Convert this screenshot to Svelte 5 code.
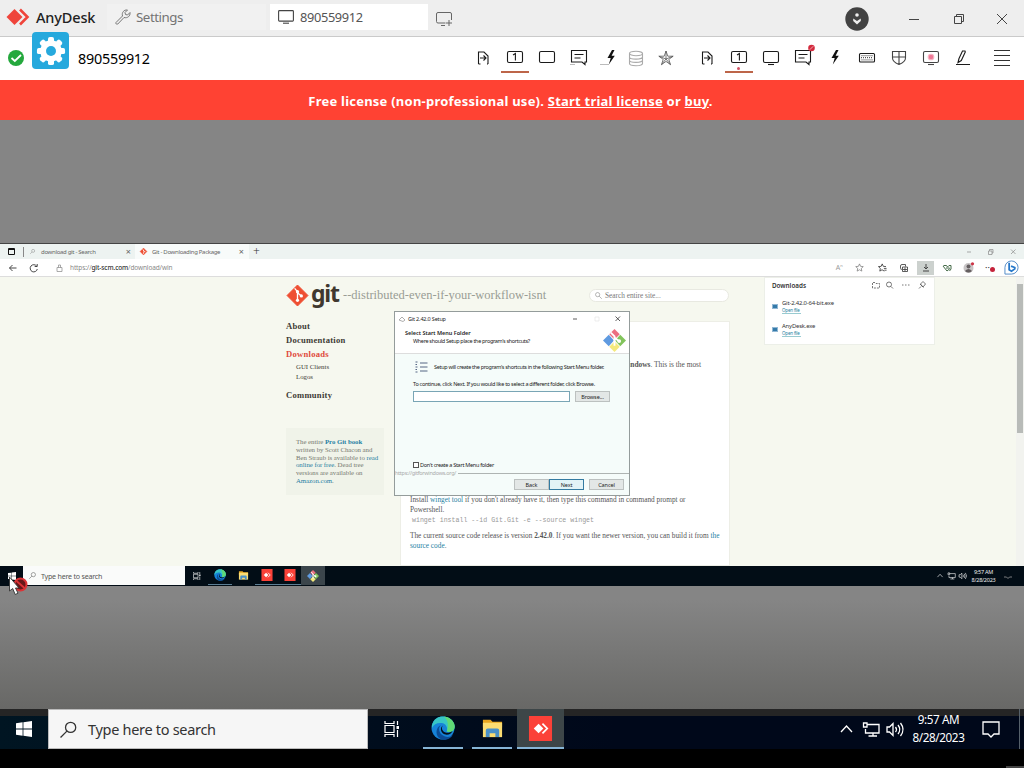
<script>
  const leftTools = ["file", "monitorOne", "monitorFlat", "chat", "bolt", "stack", "star"];
  const rightTools = ["file", "monitorOne", "monitor", "chatBlocked", "boltPlain", "keyboard", "shield", "record", "pen"];

  const downloads = ["Git-2.42.0-64-bit.exe", "AnyDesk.exe"];
</script>

{#snippet icon(name)}
  <svg class="icon {name}" viewBox="0 0 20 20" width="20" height="20">
    {#if name === "file"}
      <path d="M5.500 16V4h5.500l4 4v8M5.500 16h2M15 16h-1M7 10h6M10.500 7.500 13 10l-2.500 2.500" />
    {:else if name === "monitorOne" || name === "monitor" || name === "monitorFlat"}
      <rect x="2.500" y="3.500" width="15" height="11" rx="1.500" />
      {#if name === "monitorOne"}<path d="M8 7 10.400 5.500V12.500" />{/if}
      {#if name === "monitor"}<path d="M7 16.500h6" />{/if}
    {:else if name === "chat" || name === "chatBlocked"}
      <path d="M2.500 2.500h15v11.500h-1.500v2.500L13 14H2.500zM5.500 6.500h9M5.500 10h6" />
      {#if name === "chatBlocked"}
        <circle class="red" cx="18.500" cy="0" r="3.300" />
        <path class="slash" d="m16.700 1.800 3.600-3.600" />
      {:else}
        <path class="faint" d="M1 16.500h5" />
      {/if}
    {:else if name === "bolt" || name === "boltPlain"}
      <path class="solid" d="M11 2 6.500 10h3.200L7.800 16.500l6-8.800h-3.200L13.500 2z" />
      {#if name === "bolt"}<path class="faint" d="M-1 16.500h9" />{/if}
    {:else if name === "stack"}
      <ellipse cx="10" cy="5.500" rx="6.500" ry="2.200" />
      <path d="M3.500 5.500v10c0 3 13 3 13 0v-10M3.500 9c0 2.800 13 2.800 13 0M3.500 12.300c0 2.800 13 2.800 13 0" />
    {:else if name === "star"}
      <path d="m10 3 1.800 5.200h5.400l-4.400 3.200 1.700 5.300-4.500-3.300-4.500 3.300 1.700-5.300-4.400-3.200h5.400zM10 3v8M3 8.300l7 2.700 7-2.700M5.500 16.500 10 11l4.500 5.500" />
    {:else if name === "keyboard"}
      <rect x="2.500" y="5.500" width="15" height="8.500" rx="1" />
      <path class="keys" d="M4.500 7.700h11M4 9.700h12M4.500 11.900h11" />
    {:else if name === "shield"}
      <path d="M3.500 3.500h13v6.500c0 3-3 5-6.500 6.500-3.500-1.500-6.500-3.500-6.500-6.500zM10 3.500v13M3.500 9h13" />
    {:else if name === "record"}
      <rect x="2.500" y="3.500" width="15" height="11" rx="1.500" />
      <circle class="pink" cx="10" cy="9" r="2.800" />
      <path d="M7 16.500h6" />
    {:else if name === "pen"}
      <path d="m5 14.500 1-4 3.500-7.500h2.500l.300 1-4 8.500zM3 16.500h14" />
    {/if}
  </svg>
{/snippet}

{#snippet edge(size)}
  <svg viewBox="0 0 24 24" width={size} height={size}>
    <circle cx="12" cy="12" r="11.500" fill="#1683d8" />
    <path d="M1 9C3 2 8 0 13 .500c7 .700 11 6 10.700 10.500-.300 4-4 6-8 4.500 1.500-4-1-8-5-8.500C6 6.500 3 8 1 12z" fill="#37c6c5" />
    <path d="M13 .500c7 .700 11 6 10.700 10.500-.300 4-4 6-8 4.500C18 10 17 4 13 .500z" fill="#5fd975" />
    <path d="M10 9c-3 2-3 9 4 11.500 3 1 6 .200 8-1.500-3 5-10 6-14 3C4 18 5 11 10 9z" fill="#0b4c96" />
    <path d="M12 9.500c-2 2-1 6 2.500 7 2.500.700 5 0 7-1.500-1 3-5 4.500-8 3.200C9 16.500 9 11 12 9.500z" fill="#03111d" />
  </svg>
{/snippet}

{#snippet folder(size)}
  <svg viewBox="0 0 24 22" width={size} height={size}>
    <path d="M2 2h8l2 2h10v6H2z" fill="#e8a520" />
    <path d="M2 5h20v15H2z" fill="#fbdc72" />
    <path d="M5 20v-7q0-2 2-2h10q2 0 2 2v7h-4v-4H9v4z" fill="#4a90c8" />
  </svg>
{/snippet}

{#snippet anydesk(size)}
  <svg viewBox="0 0 24 26" width={size} height={size}>
    <path d="M0 0h24v26H0z" fill="#fb4138" />
    <path d="m10 8 5 5-5 5-5-5z" fill="#fff" />
    <path d="m14 8 5 5-5 5" fill="none" stroke="#fff" stroke-width="1.800" />
  </svg>
{/snippet}

{#snippet windows(size)}
  <svg viewBox="0 0 16 16" width={size} height={size} fill="#fff">
    <path d="M0 2.200 6.600 1.300v6.300H0zM7.400 1.200 16 0v7.600H7.400zM0 8.400h6.600v6.300L0 13.800zM7.400 8.400H16V16l-8.600-1.200z" />
  </svg>
{/snippet}

{#snippet taskView(size)}
  <svg viewBox="0 0 16 16" width={size} height={size} fill="none" stroke="#fff" stroke-width="1.200">
    <path d="M1 0v2.500h9V0M1 16v-2.500h9V16M1 4.500h9v7H1zM13.500 0v4M13.500 9v7" />
    <path d="M12.500 5h2.500v3h-2.500z" fill="#fff" stroke="none" />
  </svg>
{/snippet}

{#snippet magnifier(size)}
  <svg class="magnifier" viewBox="0 0 16 16" width={size} height={size} fill="none" stroke="currentColor" stroke-width="1.200">
    <circle cx="10" cy="6" r="4.800" /><path d="m6.500 9.500-6 6" />
  </svg>
{/snippet}

{#snippet tray(width)}
  <svg viewBox="0 0 64 20" {width} height={width * 20 / 64} fill="none" stroke="#fff" stroke-width="1.300">
    <path d="m1 13 5.500-6 5.500 6" />
    <path d="M27 5.500h12v8.500H25.500v-4M33 14v3M28.500 17H37M23.500 4h3.500v4h-3.500z" />
    <path d="M47 8v5h2.500l3.500 3.500V4.500L49.500 8zM55.500 8q2 2.500 0 5M58 6q3.500 4.500 0 9M60.500 4q5 6.500 0 13" />
  </svg>
{/snippet}

{#snippet gitLogo(size)}
  <svg viewBox="0 0 22 22" width={size} height={size}>
    <path d="M11 0 22 11 11 22 0 11z" fill="#ee4f33" stroke="#ee4f33" stroke-linejoin="round" />
    <path d="m8 3.500 3 3.500v9M11 8l4 3.500" fill="none" stroke="#fff" stroke-width="1.400" />
    <g fill="#fff"><circle cx="11" cy="7" r="1.700" /><circle cx="11" cy="16" r="1.700" /><circle cx="15" cy="11.500" r="1.700" /></g>
  </svg>
{/snippet}

{#snippet gitDiamond(size)}
  <svg viewBox="0 0 22 22" width={size} height={size}>
    <path d="m11 0 5 5-5 5-5-5z" fill="#ec6f80" />
    <path d="m5.500 5.500 5 5.500-5 5.500L0 11z" fill="#5f9ae0" />
    <path d="m16.500 5.500 5.500 5.500-5.500 5.500-5-5.500z" fill="#82c45c" />
    <path d="m11 12 5 5-5 5-5-5z" fill="#f3e97c" />
    <path d="M7.500 3.500 11 7v9M11 8l4 3.500" fill="none" stroke="#fff" stroke-width="1.800" />
    <circle cx="15.500" cy="11.500" r="1.800" fill="#fff" />
  </svg>
{/snippet}

<div class="screen">
  <header class="titlebar">
    <svg class="logo" viewBox="0 0 24 18" width="24" height="18">
      <path d="m8.500 1 8 8-8 8-8-8z" fill="#ef443b" />
      <path d="m14 1.500 7.500 7.500-7.500 7.500" fill="none" stroke="#ef443b" stroke-width="2.600" />
    </svg>
    <span class="brand">AnyDesk</span>
    <div class="tab settings">
      <svg viewBox="0 0 16 16" width="16" height="16" fill="none" stroke="#777">
        <path d="M1 13.500 7.500 7C6.500 3.500 9 .500 12.500 1L10 3.500l.500 2 2 .500L15 3.500c.500 3.500-2.500 6-6 5L2.800 15q-1 .500-1.500 0-.800-.800-.300-1.500z" />
      </svg>
      <span>Settings</span>
    </div>
    <div class="tab session">
      <svg viewBox="0 0 16 14" width="16" height="14" fill="none" stroke="#444" stroke-width="1.100">
        <rect x=".600" y=".600" width="14.800" height="10.500" rx=".800" /><path d="M5 13.200h6" />
      </svg>
      <span>890559912</span>
    </div>
    <svg class="new-tab" viewBox="0 0 17 15" width="17" height="15" fill="none" stroke="#666">
      <path d="M9.500 11H2Q.500 11 .500 9.500V2Q.500.500 2 .500h12q1.500 0 1.500 1.500v6M5 13.500h4M13 8v6M10 11h6" />
    </svg>
    <svg class="avatar" viewBox="0 0 24 24" width="24" height="24">
      <circle cx="12" cy="12" r="11.700" fill="#424242" />
      <circle cx="12" cy="8" r="1.800" fill="#eee" />
      <path d="m8.200 11.500 3.800 2.500 3.800-2.500v2.500L12 17.500 8.200 14z" fill="#eee" />
    </svg>
    <svg class="controls" viewBox="0 0 100 12" width="100" height="12" fill="none" stroke="#444">
      <path d="M1 6.500h10" />
      <path d="M46.500 3.500h7v7h-7zM48.500 3.500v-2h7v7h-2" />
      <path d="m89 1 10 10M99 1 89 11" />
    </svg>
  </header>

  <div class="toolbar">
    <svg class="ok" viewBox="0 0 16 16" width="16" height="16">
      <circle cx="8" cy="8" r="8" fill="#24a83d" /><path d="m3.500 8 3.300 3L13 5" fill="none" stroke="#fff" stroke-width="1.800" />
    </svg>
    <div class="gear">
      <svg viewBox="-16 -16 32 32" width="30" height="30">
        <g fill="#fff">
          {#each [0, 45, 90, 135] as angle}
            <rect x="-3.200" y="-15" width="6.400" height="30" rx="2" transform="rotate({angle})" />
          {/each}
          <circle r="11.500" />
        </g>
        <circle r="5.300" fill="#26a9dd" />
      </svg>
    </div>
    <span class="address">890559912</span>
    <div class="tools left">
      {#each leftTools as name, i}
        <div class="tool tool-{name}" class:selected={i === 1}>{@render icon(name)}</div>
      {/each}
    </div>
    <div class="tools right">
      {#each rightTools as name, i}
        <div class="tool" class:selected={i === 1} class:dot={i === 1}>{@render icon(name)}</div>
      {/each}
    </div>
    <svg class="menu" viewBox="0 0 17 17" width="17" height="17" stroke="#333">
      <path d="M0 .500h16M0 5.500h16M0 10.500h16M0 15.500h16" />
    </svg>
  </div>

  <div class="banner">
    <p>Free license (non-professional use). <u>Start trial license</u> or <u>buy</u>.</p>
  </div>

  <main class="stage">
    <section class="remote">
      <div class="browser-tabs">
        <span class="workspace"></span>
        <div class="browser-tab search-tab">
          {@render magnifier(5)}
          <span class="tab-title">download git - Search</span>
          <span class="close">×</span>
        </div>
        <div class="browser-tab git-tab">
          {@render gitLogo(7)}
          <span class="tab-title">Git - Downloading Package</span>
          <span class="close">×</span>
        </div>
        <span class="plus">+</span>
        <svg class="browser-controls" viewBox="0 0 50 8" width="50" height="8" fill="none" stroke="#888" stroke-width=".700">
          <path d="M1 4h4M22.500 3h3.500v3.500h-3.500zM23.500 3V1.500H27V5h-1M45 1.500l4.500 4.500M49.500 1.500 45 6" />
        </svg>
      </div>

      <div class="address-bar">
        <svg viewBox="0 0 56 10" width="56" height="10" fill="none" stroke="#333" stroke-width=".900">
          <path d="M8.500 5H1.500M4.500 2 1.500 5l3 3" />
          <path d="M28.700 3.200A3.600 3.600 0 1 0 29.300 6M29.200 1v2.500H26.700" />
          <path d="M49 4.500h5v4h-5zM50.500 4.500V2h2v2.500" stroke="#888" stroke-width=".700" />
        </svg>
        <span class="url">https://<b>git-scm.com</b>/download/win</span>
        <div class="browser-actions">
          <span class="read">A<sup>n</sup></span>
          <svg viewBox="0 0 10 10" width="9" height="9" fill="none" stroke="#777" stroke-width=".800"><path d="m5 1 1.200 2.700 3 .300L7 6l.600 3L5 7.500 2.400 9 3 6 .800 4l3-.300z" /></svg>
          <svg viewBox="0 0 10 10" width="9" height="9" fill="none" stroke="#333" stroke-width=".900"><path d="M7 9 4.500 7.500 2 9l.600-3L.500 4l3-.300L4.700 1l1.200 2.700 3 .300M6.500 6h3M7 8h2.500" /></svg>
          <svg viewBox="0 0 10 10" width="10" height="10" fill="none" stroke="#333" stroke-width=".800"><path d="M1.500 5V3q0-1.500 1.500-1.500h3.500v2M3.500 4h5v4.500h-5zM6 4.500v3.500M4 6.500h4M1.500 5l1 2" /></svg>
          <span class="download-button"><svg viewBox="0 0 8 9" width="8" height="9" stroke="#444" fill="none"><path d="M4 1v5M2 4l2 2 2-2M1 8h6" /></svg></span>
          <svg viewBox="0 0 10 10" width="10" height="10" fill="none" stroke="#456b48"><path d="m1 3 4 5 3-2.500M1.500 2.500h3L5.500 4 7 2.500h2V6L7.500 8M4 5h3.500" /></svg>
          <svg viewBox="0 0 12 12" width="12" height="12"><circle cx="5.500" cy="6" r="5" fill="#c8c5c6" /><circle cx="5.500" cy="4.500" r="2" fill="#655f61" /><path d="M2 9q3.500-4 7 0-3.500 3-7 0" fill="#655f61" /><circle cx="9.500" cy="1.800" r="1.600" fill="#cd3345" /></svg>
          <span class="alert">··<i></i></span>
          <svg viewBox="0 0 16 16" width="15" height="15"><path d="M1 15V8a7 7 0 1 1 7 7z" fill="#fff" stroke="#4d87c5" /><path d="M5.500 3v7.500l2.500 1.500 3.500-2.500v-1.500L7.500 6.500" fill="none" stroke="#2477ca" stroke-width="1.900" /></svg>
        </div>
      </div>

      <div class="page">
        <div class="site-header">
          {@render gitLogo(21)}
          <strong class="git-name">git</strong>
          <span class="tagline">--distributed-even-if-your-workflow-isnt</span>
          <div class="site-search">{@render magnifier(7)}<span>Search entire site...</span></div>
        </div>
        <div class="site-body">
          <aside>
            <nav>
              <b>About</b>
              <b>Documentation</b>
              <b class="current">Downloads</b>
              <span>GUI Clients</span>
              <span>Logos</span>
              <b class="community">Community</b>
            </nav>
            <p class="book">The entire <a href="#book"><b>Pro Git book</b></a><br />written by Scott Chacon and<br />Ben Straub is available to <a href="#book">read</a><br /><a href="#book">online for free</a>. Dead tree<br />versions are available on<br /><a href="#amazon">Amazon.com</a>.</p>
          </aside>
          <article>
            <p class="intro"><b>Windows</b>. This is the most</p>
            <p class="install">Install <a href="#winget">winget tool</a> if you don't already have it, then type this command in command prompt or<br />Powershell.</p>
            <code>winget install --id Git.Git -e --source winget</code>
            <p class="release">The current source code release is version <b>2.42.0</b>. If you want the newer version, you can build it from <a href="#source">the<br />source code</a>.</p>
          </article>
        </div>
        <div class="scrollbar"><i></i></div>

        <div class="downloads-popup">
          <div class="downloads-title">
            <b>Downloads</b>
            <svg viewBox="0 0 56 10" width="56" height="10" fill="none" stroke="#555" stroke-width=".800">
              <path d="M1.500 8V2.500H4l1 1h3.500V8h-7" stroke-dasharray="2 1" />
              <circle cx="18" cy="4.500" r="2.500" /><path d="m20 6.500 2 2M31 5h1.500M34 5h1.500M37 5h1.500M48 8.500l2-2M49 4l3.500 3.500M49.500 4 52 1.500 54.500 4 52 7z" />
            </svg>
          </div>
          {#each downloads as name}
            <div class="download">
              <i></i>
              <div><span>{name}</span><a href="#open">Open file</a></div>
            </div>
          {/each}
        </div>

        <div class="dialog">
          <div class="dialog-title">
            <svg viewBox="0 0 8 6" width="8" height="6" fill="none" stroke="#999" stroke-width=".800"><path d="m1 4 3-3 3 3-2 1.500z" /></svg>
            <span>Git 2.42.0 Setup</span>
            <svg class="dialog-controls" viewBox="0 0 50 8" width="50" height="8" fill="none" stroke="#333" stroke-width=".800">
              <path d="M1 4h4M43.500 1.500l4.500 4.500M48 1.500 43.500 6" /><path d="M23 2h4v4h-4z" stroke="#e8e8e8" />
            </svg>
          </div>
          <div class="dialog-head">
            <div><b>Select Start Menu Folder</b><span>Where should Setup place the program's shortcuts?</span></div>
            {@render gitDiamond(23)}
          </div>
          <div class="dialog-body">
            <div class="folder-note">
              <svg viewBox="0 0 12 12" width="13" height="12" stroke="#457" stroke-width=".900"><path d="M0 1h2M0 3.500h1.500M0 6h2M0 8.500h1.500M0 11h2M4.500 2H12M4.500 6H12M4.500 10H12" /></svg>
              <span>Setup will create the program's shortcuts in the following Start Menu folder.</span>
            </div>
            <p>To continue, click Next. If you would like to select a different folder, click Browse.</p>
            <div class="path-row"><span class="path"></span><span class="button browse">Browse...</span></div>
            <div class="check"><i></i><span>Don't create a Start Menu folder</span></div>
            <div class="origin"><span>https://gitforwindows.org/</span></div>
            <div class="buttons">
              <span class="button">Back</span>
              <span class="button next">Next</span>
              <span class="button">Cancel</span>
            </div>
          </div>
        </div>
      </div>

      <div class="mini-taskbar">
        <span class="mini-start">{@render windows(8)}</span>
        <div class="mini-search">{@render magnifier(7)}<span>Type here to search</span></div>
        <div class="mini-app">{@render taskView(8)}</div>
        <div class="mini-app running">{@render edge(12)}</div>
        <div class="mini-app">{@render folder(11)}</div>
        <div class="mini-app running">{@render anydesk(12)}</div>
        <div class="mini-app running">{@render anydesk(12)}</div>
        <div class="mini-app active">{@render gitDiamond(12)}</div>
        <div class="mini-tray">
          {@render tray(30)}
          <div class="mini-clock">9:57 AM<br />8/28/2023</div>
          <svg viewBox="0 0 8 8" width="8" height="8" fill="none" stroke="#999" stroke-width=".800"><path d="M0 5h2.500L4 6.500 5.500 5H8" /></svg>
        </div>
      </div>
      <svg class="cursor" viewBox="0 0 22 24" width="22" height="24">
        <circle cx="12.500" cy="8.500" r="6" fill="#671719" stroke="#dc3336" stroke-width="2" />
        <path d="m8.500 5 8 7" stroke="#dc3336" stroke-width="1.800" />
        <path d="M1.500 1v14l3.200-2.500 2.500 6 2.800-1.300-2.500-5.200H11z" fill="#fff" stroke="#333" stroke-width=".900" />
      </svg>
    </section>
  </main>

  <footer class="taskbar">
    <span class="start">{@render windows(16)}</span>
    <div class="search">{@render magnifier(17)}<span>Type here to search</span></div>
    <div class="app">{@render taskView(16)}</div>
    <div class="app edge-app running">{@render edge(24)}</div>
    <div class="app running">{@render folder(23)}</div>
    <div class="app running active">{@render anydesk(25)}</div>
    <div class="system">
      {@render tray(64)}
      <div class="clock">9:57 AM<br />8/28/2023</div>
      <svg viewBox="0 0 18 18" width="18" height="18" fill="none" stroke="#fff" stroke-width="1.300"><path d="M1 2h16v12h-5l-3 3-3-3H1z" /></svg>
      <i class="peek"></i>
    </div>
  </footer>
  <div class="bezel"><i></i></div>
</div>

<style>
  :global(body) {
    margin: 0;
    overflow: hidden;
    background: #000;
  }

  .screen {
    display: flex;
    flex-direction: column;
    width: 1024px;
    height: 768px;
    overflow: hidden;
    font-family: "Noto Sans", "Open Sans", sans-serif;
    white-space: nowrap;
  }

  .screen * {
    box-sizing: border-box;
  }

  svg {
    display: block;
    flex: none;
    overflow: visible;
  }

  p {
    margin: 0;
  }

  .titlebar {
    display: flex;
    align-items: center;
    flex: none;
    height: 37px;
    padding: 0 16px 2px 6px;
    border-bottom: 1px solid #cacaca;
    background: #eee;
    color: #222;
  }

  .brand {
    width: 71px;
    margin-left: 6px;
    font-size: 14.5px;
    font-weight: 500;
    letter-spacing: -0.15px;
  }

  .tab {
    display: flex;
    align-items: center;
    gap: 6px;
    height: 26px;
    padding-left: 8px;
    background: #f1f1f1;
    color: #747474;
    font-size: 13.3px;
    letter-spacing: -0.45px;
  }

  .settings {
    width: 159px;
    gap: 5px;
  }

  .session {
    width: 158px;
    margin-left: 4px;
    background: #fff;
    color: #555;
    font-size: 12.8px;
    letter-spacing: -0.35px;
  }

  .new-tab {
    margin: 5px 0 0 8px;
  }

  .avatar {
    margin: 3px 0 0 392px;
  }

  .controls {
    margin: 3px 0 0 auto;
  }

  .toolbar {
    display: flex;
    flex: none;
    height: 43px;
    background: #fff;
  }

  .ok {
    margin: 13px 8px 0;
  }

  .gear {
    display: grid;
    place-items: center;
    width: 37px;
    height: 37px;
    margin-top: -5px;
    border-radius: 4px;
    background: #26a9dd;
  }

  .address {
    width: 397px;
    padding: 12px 0 0 9px;
    font-size: 14.4px;
    line-height: 20px;
    letter-spacing: -0.25px;
  }

  .gear,
  .address {
    flex: none;
  }

  .tools {
    display: flex;
  }

  .tools.right {
    margin-left: 6px;
  }

  .tool {
    display: flex;
    justify-content: center;
    width: 32px;
    padding-top: 11px;
  }

  .left .tool {
    margin-left: 1px;
    margin-right: -1px;
  }

  .left .tool-stack {
    width: 18px;
  }

  .left .tool-star {
    width: 41px;
  }

  .selected {
    position: relative;
  }

  .selected::after {
    content: "";
    position: absolute;
    right: 2px;
    bottom: 7px;
    left: 2px;
    height: 2px;
    background: #bd6549;
  }

  .dot::before {
    content: "";
    position: absolute;
    top: 30px;
    left: 14px;
    width: 3px;
    height: 3px;
    border-radius: 50%;
    background: #d35264;
  }

  .icon {
    fill: none;
    stroke: #1a1a1a;
    stroke-width: 1.1;
  }

  .icon .solid {
    fill: #111;
    stroke: none;
  }

  .icon .faint {
    stroke: #aaa;
    stroke-width: 0.8;
  }

  .icon .red {
    fill: #d32a3d;
    stroke: none;
  }

  .icon .slash {
    stroke: #f2b9be;
    stroke-width: 0.9;
  }

  .icon .pink {
    fill: #ef7896;
    stroke: #f5b5c4;
  }

  .icon .keys {
    stroke: #555;
    stroke-dasharray: 1 1;
    stroke-width: 1.2;
  }

  .stack {
    stroke: #aaa;
  }

  .star {
    stroke: #555;
    stroke-width: 0.8;
  }

  .shield,
  .record {
    stroke: #444;
  }

  .menu {
    margin: 13px 0 0 15px;
  }

  .banner {
    display: flex;
    justify-content: center;
    align-items: center;
    flex: none;
    height: 40px;
    padding: 1px 3px 0 0;
    background: #ff4233;
    color: #fff;
    font-size: 13px;
    font-weight: 700;
    letter-spacing: 0.23px;
  }

  .stage {
    flex: none;
    height: 589px;
    padding-top: 123px;
    background: linear-gradient(#858585 0 480px, #686866);
  }

  .remote {
    position: relative;
    display: flex;
    flex-direction: column;
    height: 343px;
    background: #fff;
    color: #333;
    font-size: 6px;
  }

  .browser-tabs {
    display: flex;
    align-items: center;
    flex: none;
    height: 16px;
    padding: 0 8px 0 8px;
    border-top: 1px solid #444;
    background: #edf3f1;
  }

  .workspace {
    width: 7px;
    height: 7px;
    border: 1px solid #111;
    border-top-width: 2px;
    border-radius: 1px;
  }

  .browser-tab {
    display: flex;
    align-items: center;
    height: 15px;
    padding: 0 4px 0 6px;
    color: #666;
  }

  .search-tab {
    width: 112px;
    height: 10px;
    margin-left: 8px;
    border-left: 1px solid #888;
  }

  .tab-title {
    margin-left: 5px;
    letter-spacing: -0.3px;
  }

  .search-tab .tab-title {
    margin-left: 6px;
    letter-spacing: -0.3px;
  }

  .git-tab {
    width: 114px;
    padding: 0 5px;
    background: #f8fbfa;
  }

  .close {
    margin-left: auto;
    font-size: 9px;
  }

  .plus {
    margin-left: 4px;
    font-size: 12px;
    font-weight: 300;
    line-height: 12px;
  }

  .browser-controls {
    margin-left: auto;
  }

  .address-bar {
    display: flex;
    align-items: center;
    flex: none;
    height: 18px;
    padding: 0 2px 0 8px;
    border-bottom: 1px solid #ddd;
  }

  .url {
    margin-left: 6px;
    color: #888;
    font-size: 6.5px;
    letter-spacing: -0.12px;
  }

  .url b {
    color: #333;
    font-weight: 500;
  }

  .browser-actions {
    display: grid;
    grid-template-columns: 14px 26px repeat(7, 21.4px);
    place-items: center;
    margin-left: auto;
  }

  .browser-actions sup {
    font-size: 4px;
  }

  .read {
    color: #999;
    font-size: 7px;
  }

  .download-button {
    display: grid;
    place-items: center;
    width: 17px;
    height: 14px;
    background: #ccd1ce;
  }

  .alert {
    display: flex;
    align-items: center;
    font-size: 9px;
    line-height: 10px;
  }

  .alert i {
    width: 5px;
    height: 5px;
    margin-top: 4px;
    border-radius: 50%;
    background: #c5233b;
  }

  .page {
    position: relative;
    flex: none;
    height: 289px;
    padding-left: 286px;
    overflow: hidden;
    background: #f6f8ef;
    font-family: "Liberation Serif", serif;
  }

  .site-header {
    display: flex;
    align-items: center;
    height: 36px;
    padding-left: 1px;
  }

  .git-name {
    width: 32px;
    margin: -5px 0 0 3px;
    color: #40382f;
    font: 700 23px/32px "Noto Sans", sans-serif;
    letter-spacing: -1.2px;
  }

  .tagline {
    width: 246px;
    color: #999d95;
    font-size: 12.5px;
  }

  .site-search {
    display: flex;
    align-items: center;
    gap: 3px;
    width: 140px;
    height: 13px;
    padding-left: 5px;
    border: 1px solid #e8e9e1;
    border-radius: 7px;
    background: #fff;
    color: #777;
    font-size: 7.3px;
  }

  .site-search :global(svg) {
    transform: scaleX(-1);
  }

  .site-body {
    display: grid;
    grid-template-columns: 114px 330px;
    height: 253px;
    padding-top: 8px;
  }

  nav {
    display: flex;
    flex-direction: column;
    height: 107px;
    color: #3d3b35;
  }

  nav b {
    font-size: 8.6px;
    line-height: 14.2px;
    letter-spacing: 0.25px;
  }

  nav .current {
    color: #df4a3c;
  }

  nav span {
    padding-left: 10px;
    font-size: 6.8px;
    line-height: 10.5px;
  }

  nav .community {
    margin-top: 5px;
  }

  nav b:first-child {
    margin-top: -2px;
  }

  .book {
    width: 98px;
    height: 67px;
    padding: 10px 9px 9px 10px;
    background: #f0f3e9;
    color: #777970;
    font-size: 6.8px;
    line-height: 7.8px;
    letter-spacing: -0.04px;
  }

  a {
    color: #287fa3;
    text-decoration: none;
  }

  article {
    padding: 37px 10px 0 9px;
    border: 1px solid #edeee6;
    background: #fff;
    color: #555;
    font-size: 7.4px;
    line-height: 10.5px;
  }

  .intro {
    margin: 1px 0 0 211px;
  }

  .install {
    height: 21px;
    margin-top: 124px;
    font-size: 7.3px;
  }

  code {
    display: block;
    margin-left: 2px;
    color: #999;
    font: 6.6px/10px "Liberation Mono", monospace;
  }

  .release {
    margin-top: 5px;
    font-size: 7.3px;
  }

  .scrollbar {
    position: absolute;
    top: 0;
    right: 0;
    width: 8px;
    height: 289px;
    padding: 7px 1px;
    background: #f2f3ef;
  }

  .scrollbar i {
    display: block;
    height: 149px;
    background: #b8bbb8;
  }

  .downloads-popup {
    position: absolute;
    top: 0;
    left: 764px;
    width: 171px;
    height: 68px;
    padding: 1px 7px;
    border: 1px solid #ecefe8;
    background: #fff;
    font-family: "Noto Sans", sans-serif;
  }

  .downloads-title {
    display: flex;
    align-items: center;
    justify-content: space-between;
    height: 12px;
    margin-bottom: 4px;
    font-size: 6.3px;
  }

  .downloads-title b {
    font-weight: 600;
  }

  .download {
    display: flex;
    align-items: center;
    gap: 4px;
    height: 23px;
    font-size: 5.9px;
    line-height: 7px;
    letter-spacing: -0.17px;
  }

  .download > i {
    width: 6px;
    height: 5px;
    border: 1px solid #91b7d4;
    background: #347aa9;
  }

  .download a {
    display: block;
    width: 19px;
    border-bottom: 1px solid #99cbd1;
    font-size: 4.5px;
    line-height: 6px;
  }

  .dialog {
    position: absolute;
    top: 34px;
    left: 394px;
    width: 236px;
    height: 185px;
    border: 1px solid #949c9b;
    background: #fff;
    color: #222;
    font: 5.5px "Noto Sans", sans-serif;
  }

  .dialog-title {
    display: flex;
    align-items: center;
    height: 13px;
    padding: 0 7px 0 3px;
  }

  .dialog-title span {
    margin-left: 2px;
    letter-spacing: -0.18px;
  }

  .dialog-controls {
    margin-left: auto;
  }

  .dialog-head {
    display: flex;
    justify-content: space-between;
    height: 28px;
    padding: 4px 3px 0 10px;
  }

  .dialog-head b,
  .dialog-head span {
    display: block;
    line-height: 8px;
    letter-spacing: 0;
  }

  .dialog-head b {
    font-weight: 600;
  }

  .dialog-head span {
    margin-left: 8px;
    letter-spacing: -0.33px;
  }

  .dialog-body {
    height: 142px;
    border-top: 1px solid #ddd;
    background: #f5fcfa;
    letter-spacing: -0.28px;
  }

  .folder-note {
    display: flex;
    align-items: center;
    gap: 6px;
    height: 25px;
    padding-left: 20px;
    letter-spacing: -0.32px;
  }

  .dialog-body p {
    height: 12px;
    padding-left: 18px;
    line-height: 10px;
  }

  .path-row {
    display: flex;
    gap: 5px;
    padding-left: 18px;
  }

  .path {
    width: 157px;
    height: 11px;
    border: 1px solid #79a5b5;
    background: #fff;
  }

  .button {
    display: grid;
    place-items: center;
    width: 35px;
    height: 11px;
    border: 1px solid #bcc1c0;
    background: #e3e7e6;
    letter-spacing: -0.1px;
  }

  .check {
    display: flex;
    align-items: center;
    gap: 1px;
    height: 8px;
    margin: 59px 0 0 18px;
  }

  .check i {
    width: 6px;
    height: 6px;
    border: 1px solid #555;
    background: #fff;
  }

  .origin {
    display: flex;
    align-items: center;
    height: 6px;
    margin-top: 1px;
    color: #aaa;
    font-size: 5.5px;
  }

  .origin::after {
    content: "";
    flex: 1;
    height: 1px;
    margin-left: 2px;
    background: #aeb4b2;
  }

  .buttons {
    display: flex;
    justify-content: flex-end;
    gap: 5px;
    padding: 3px 5px 0 0;
  }

  .button.next {
    margin-left: -5px;
    border-color: #347ba1;
    background: #e2f3f6;
  }

  .mini-taskbar {
    display: flex;
    flex: none;
    height: 20px;
    background: #020d16;
  }

  .mini-start {
    display: grid;
    place-items: center;
    width: 23px;
  }

  .mini-search {
    display: flex;
    align-items: center;
    gap: 5px;
    width: 162px;
    height: 19px;
    padding-left: 6px;
    background: #fafbfa;
    color: #555;
    font-size: 7.1px;
    letter-spacing: -0.22px;
  }

  .mini-app {
    display: grid;
    place-items: center;
    width: 23.3px;
    height: 19px;
  }

  .mini-app.running {
    border-bottom: 1px solid #5c7e94;
  }

  .mini-app.active {
    background: #3b454b;
  }

  .mini-tray {
    display: flex;
    align-items: center;
    gap: 3px;
    margin-left: auto;
    padding-right: 12px;
    color: #eee;
  }

  .mini-clock {
    width: 27px;
    margin-right: 4px;
    font-size: 5.5px;
    line-height: 8.5px;
    letter-spacing: -0.25px;
    text-align: center;
  }

  .cursor {
    position: absolute;
    top: 333px;
    left: 8px;
  }

  .taskbar {
    display: flex;
    flex: none;
    height: 40px;
    background: linear-gradient(#252525 0 7px, transparent 7px), linear-gradient(90deg, #001522, #00081a 60%);
  }

  .start {
    display: grid;
    place-items: center;
    width: 48px;
  }

  .search {
    display: flex;
    align-items: center;
    gap: 11px;
    width: 320px;
    padding-left: 11px;
    border: 1px solid #bbb;
    background: #f6f6f6;
    color: #333;
    font-size: 14.5px;
    letter-spacing: -0.3px;
  }

  .app {
    display: grid;
    place-items: center;
    width: 48px;
    border: 0 solid #86b5d7;
  }

  .app.running {
    width: 40px;
    margin-left: 9px;
    border-bottom: 2px solid #86b5d7;
  }

  .app.edge-app {
    margin-left: 7px;
  }

  .app.active {
    width: 47px;
    margin-left: 5px;
    background: #3d4648;
  }

  .system {
    display: flex;
    align-items: center;
    margin-left: auto;
    color: #fff;
  }

  .clock {
    width: 55px;
    margin: -2px 16px 0 7px;
    font-size: 11.7px;
    line-height: 18px;
    letter-spacing: -0.4px;
    text-align: center;
  }

  .peek {
    width: 1px;
    height: 40px;
    margin: 0 4px 0 19px;
    background: #56616b;
  }

  .bezel {
    display: flex;
    justify-content: flex-end;
    align-items: flex-end;
    height: 19px;
    background: #000;
  }

  .bezel i {
    width: 18px;
    height: 2px;
    background: #444;
  }
</style>
